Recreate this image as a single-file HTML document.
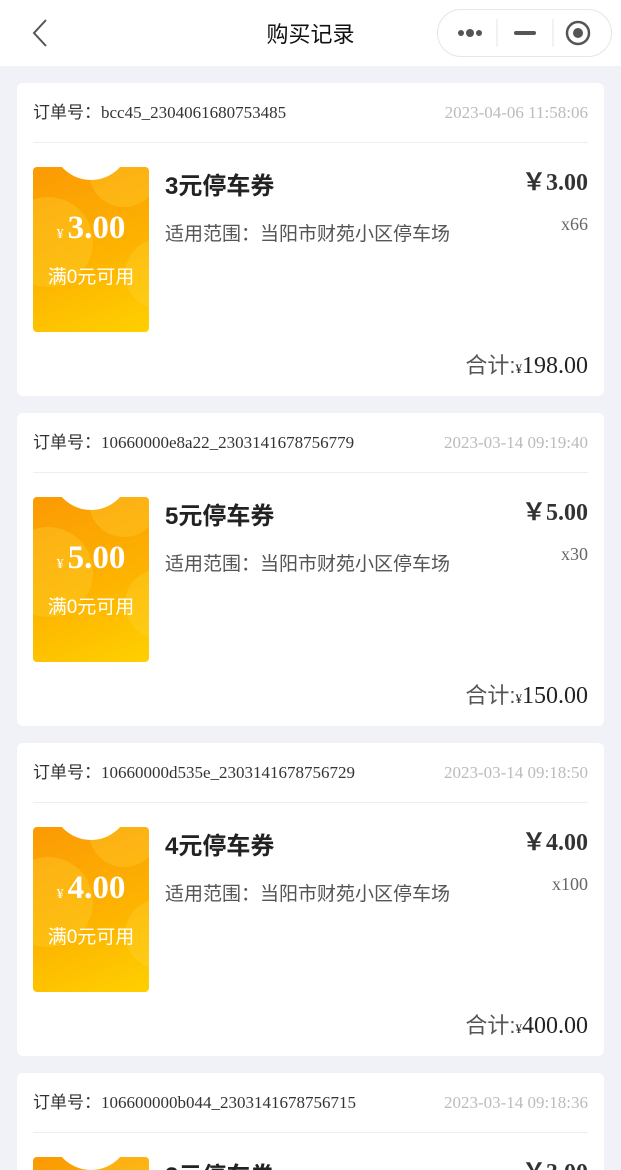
<!DOCTYPE html><html><head><meta charset="utf-8"><style>
*{margin:0;padding:0;box-sizing:border-box}
html{width:621px;height:1170px;overflow:hidden}
body{width:621px;height:1170px;overflow:hidden;background:#f1f2f7;font-family:"Liberation Serif","Noto Sans CJK SC",serif;position:relative}
.nav{position:absolute;left:0;top:0;width:621px;height:66px;background:#fff}
.title{position:absolute;left:0;right:0;top:20px;text-align:center;font:22px/30px "Liberation Sans","Noto Sans CJK SC",sans-serif;color:#111}
.cap{position:absolute;left:437px;top:9px;width:175px;height:48px;border:1px solid #e6e6e6;border-radius:24px;background:#fff}
.card{position:absolute;left:17px;width:587px;height:313px;background:#fff;border-radius:6px}
.oid{position:absolute;left:16px;top:20px;font-size:17px;line-height:20px;color:#333}
.dt{position:absolute;right:16px;top:20px;font-size:17px;line-height:20px;color:#bbb}
.hr{position:absolute;left:16px;right:16px;top:59px;height:1px;background:#eee}
.tk{position:absolute;left:16px;top:84px;width:116px;height:165px;border-radius:4px;overflow:hidden;background:linear-gradient(160deg,#fb9a05 0%,#fdb300 55%,#ffd000 100%)}
.tk i{position:absolute;border-radius:50%;background:rgba(255,215,60,.3)}
.notch{position:absolute;left:19px;top:-65px;width:78px;height:78px;border-radius:50%;background:#fff}
.pv{position:absolute;left:0;right:0;top:41px;line-height:40px;text-align:center;color:#fff;font-weight:bold;font-size:33px}
.pv small{font-size:14px;font-weight:normal;margin-right:4px}
.mz{position:absolute;left:0;right:0;top:99px;text-align:center;color:#fff;font:19px/24px "Liberation Sans","Noto Sans CJK SC",sans-serif}
.nm{position:absolute;left:148px;top:90px;font:bold 24px/28px "Liberation Sans","Noto Sans CJK SC",sans-serif;color:#222}
.rg{position:absolute;left:148px;top:140px;font:19px/24px "Liberation Sans","Noto Sans CJK SC",sans-serif;color:#555}
.pr{position:absolute;right:16px;top:86px;line-height:28px;font-weight:bold;font-size:24px;color:#333}
.qt{position:absolute;right:16px;top:131px;line-height:20px;font-size:18px;color:#666}
.tt{position:absolute;right:16px;top:269px;line-height:28px;font-size:24px;color:#222}
.tt span{font-family:"Liberation Sans","Noto Sans CJK SC",sans-serif;font-size:22px;color:#555}
.tt small{font-size:13px}
</style></head><body>
<div class="nav">
<svg style="position:absolute;left:30px;top:18px" width="20" height="30"><path d="M16 2 L4 15 L16 28" fill="none" stroke="#555" stroke-width="2"/></svg>
<div class="title">购买记录</div>
<div class="cap">
<svg width="175" height="48" style="position:absolute;left:-1px;top:-1px"><circle cx="24" cy="24" r="3" fill="#555"/><circle cx="33" cy="24" r="4" fill="#555"/><circle cx="42" cy="24" r="3" fill="#555"/><line x1="60" y1="10" x2="60" y2="38" stroke="#e6e6e6"/><rect x="77" y="22" width="22" height="4" rx="2" fill="#555"/><line x1="116" y1="10" x2="116" y2="38" stroke="#e6e6e6"/><circle cx="141" cy="24" r="11" fill="none" stroke="#555" stroke-width="2.5"/><circle cx="141" cy="24" r="5" fill="#555"/></svg>
</div></div>

<div class="card" style="top:83px"><div class="oid">订单号：bcc45_2304061680753485</div><div class="dt">2023-04-06 11:58:06</div><div class="hr"></div>
<div class="tk"><i style="left:56px;top:-30px;width:70px;height:70px"></i><i style="left:-30px;top:30px;width:90px;height:90px"></i><i style="left:92px;top:72px;width:70px;height:70px"></i><div class="notch"></div><div class="pv"><small>¥</small>3.00</div><div class="mz">满0元可用</div></div>
<div class="nm">3元停车券</div><div class="rg">适用范围：当阳市财苑小区停车场</div><div class="pr">￥3.00</div><div class="qt">x66</div><div class="tt"><span>合计:</span><small>¥</small>198.00</div></div>

<div class="card" style="top:413px"><div class="oid">订单号：10660000e8a22_2303141678756779</div><div class="dt">2023-03-14 09:19:40</div><div class="hr"></div>
<div class="tk"><i style="left:56px;top:-30px;width:70px;height:70px"></i><i style="left:-30px;top:30px;width:90px;height:90px"></i><i style="left:92px;top:72px;width:70px;height:70px"></i><div class="notch"></div><div class="pv"><small>¥</small>5.00</div><div class="mz">满0元可用</div></div>
<div class="nm">5元停车券</div><div class="rg">适用范围：当阳市财苑小区停车场</div><div class="pr">￥5.00</div><div class="qt">x30</div><div class="tt"><span>合计:</span><small>¥</small>150.00</div></div>

<div class="card" style="top:743px"><div class="oid">订单号：10660000d535e_2303141678756729</div><div class="dt">2023-03-14 09:18:50</div><div class="hr"></div>
<div class="tk"><i style="left:56px;top:-30px;width:70px;height:70px"></i><i style="left:-30px;top:30px;width:90px;height:90px"></i><i style="left:92px;top:72px;width:70px;height:70px"></i><div class="notch"></div><div class="pv"><small>¥</small>4.00</div><div class="mz">满0元可用</div></div>
<div class="nm">4元停车券</div><div class="rg">适用范围：当阳市财苑小区停车场</div><div class="pr">￥4.00</div><div class="qt">x100</div><div class="tt"><span>合计:</span><small>¥</small>400.00</div></div>

<div class="card" style="top:1073px"><div class="oid">订单号：106600000b044_2303141678756715</div><div class="dt">2023-03-14 09:18:36</div><div class="hr"></div>
<div class="tk"><i style="left:56px;top:-30px;width:70px;height:70px"></i><i style="left:-30px;top:30px;width:90px;height:90px"></i><div class="notch"></div></div>
<div class="nm">3元停车券</div><div class="pr">￥3.00</div></div>
</body></html>
